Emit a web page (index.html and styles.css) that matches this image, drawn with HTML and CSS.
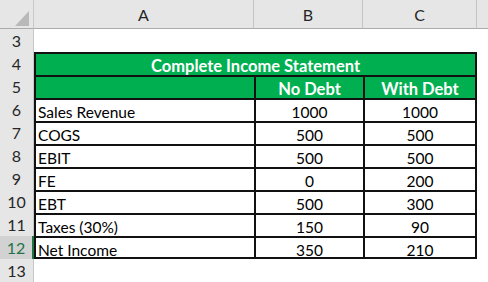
FILE: index.html
```html
<!DOCTYPE html>
<html>
<head>
<meta charset="utf-8">
<link rel="stylesheet" href="styles.css">
</head>
<body>
<div class="sheet">
  <div class="corner"><svg width="34" height="28" viewBox="0 0 34 28"><polygon points="15,26 29,26 29,11" fill="#b9b9b9"/></svg></div>
  <div class="colhead">A</div>
  <div class="colhead">B</div>
  <div class="colhead">C</div>
  <div class="colhead rest"></div>

  <div class="rowhead">3</div><div class="cell"></div><div class="cell"></div><div class="cell"></div><div class="cell"></div>

  <div class="rowhead">4</div><div class="cell t title">Complete Income Statement</div><div class="cell"></div>

  <div class="rowhead">5</div><div class="cell t g"></div><div class="cell t g b num">No Debt</div><div class="cell t g b num last">With Debt</div><div class="cell"></div>

  <div class="rowhead">6</div><div class="cell t lbl">Sales Revenue</div><div class="cell t num">1000</div><div class="cell t num last">1000</div><div class="cell"></div>
  <div class="rowhead">7</div><div class="cell t lbl">COGS</div><div class="cell t num">500</div><div class="cell t num last">500</div><div class="cell"></div>
  <div class="rowhead">8</div><div class="cell t lbl">EBIT</div><div class="cell t num">500</div><div class="cell t num last">500</div><div class="cell"></div>
  <div class="rowhead">9</div><div class="cell t lbl">FE</div><div class="cell t num">0</div><div class="cell t num last">200</div><div class="cell"></div>
  <div class="rowhead">10</div><div class="cell t lbl">EBT</div><div class="cell t num">500</div><div class="cell t num last">300</div><div class="cell"></div>
  <div class="rowhead">11</div><div class="cell t lbl">Taxes (30%)</div><div class="cell t num">150</div><div class="cell t num last">90</div><div class="cell"></div>
  <div class="rowhead sel">12</div><div class="cell t lbl bot">Net Income</div><div class="cell t num bot">350</div><div class="cell t num last bot">210</div><div class="cell"></div>

  <div class="rowhead">13</div><div class="cell"></div><div class="cell"></div><div class="cell"></div><div class="cell"></div>
</div>
</body>
</html>
```
FILE: styles.css
```css
html, body {
  margin: 0;
  padding: 0;
  background: #ffffff;
}
.sheet {
  display: grid;
  grid-template-columns: 34px 220px 109px 114px 1fr;
  grid-template-rows: 29px repeat(11, 23px);
  width: 488px;
  height: 282px;
  overflow: hidden;
  font-family: Lato, "Open Sans", sans-serif;
  font-size: 15.5px;
  color: #000;
}
.sheet > div {
  box-sizing: border-box;
}
.corner {
  background: #e6e6e6;
  border-bottom: 1px solid #ababab;
  border-right: 1px solid #c8c8c8;
}
.corner svg {
  display: block;
}
.colhead {
  background: #e6e6e6;
  border-bottom: 1px solid #ababab;
  border-right: 1px solid #c4c4c4;
  text-align: center;
  line-height: 28px;
  color: #262626;
  padding-top: 1px;
  font-size: 16px;
}
.colhead.rest {
  border-right: none;
}
.rowhead {
  background: #e6e6e6;
  border-right: 1px solid #c8c8c8;
  text-align: center;
  line-height: 24px;
  color: #262626;
  font-size: 16px;
}
.rowhead.sel {
  background: #d2d2d2;
  color: #217346;
  border-right: 2px solid #217346;
}
.cell {
  line-height: 24px;
  white-space: nowrap;
}
.t {
  border-top: 2px solid #111;
  border-left: 2px solid #111;
}
.last {
  border-right: 2px solid #111;
}
.bot {
  border-bottom: 2px solid #111;
}
.title {
  grid-column: span 3;
  background: #00b050;
  color: #fff;
  font-weight: bold;
  font-size: 16.5px;
  text-align: center;
  border-right: 2px solid #111;
}
.g {
  background: #00b050;
  color: #fff;
}
.b {
  font-weight: bold;
  font-size: 16.5px;
}
.num {
  text-align: center;
}
.lbl {
  padding-left: 2px;
}
```
